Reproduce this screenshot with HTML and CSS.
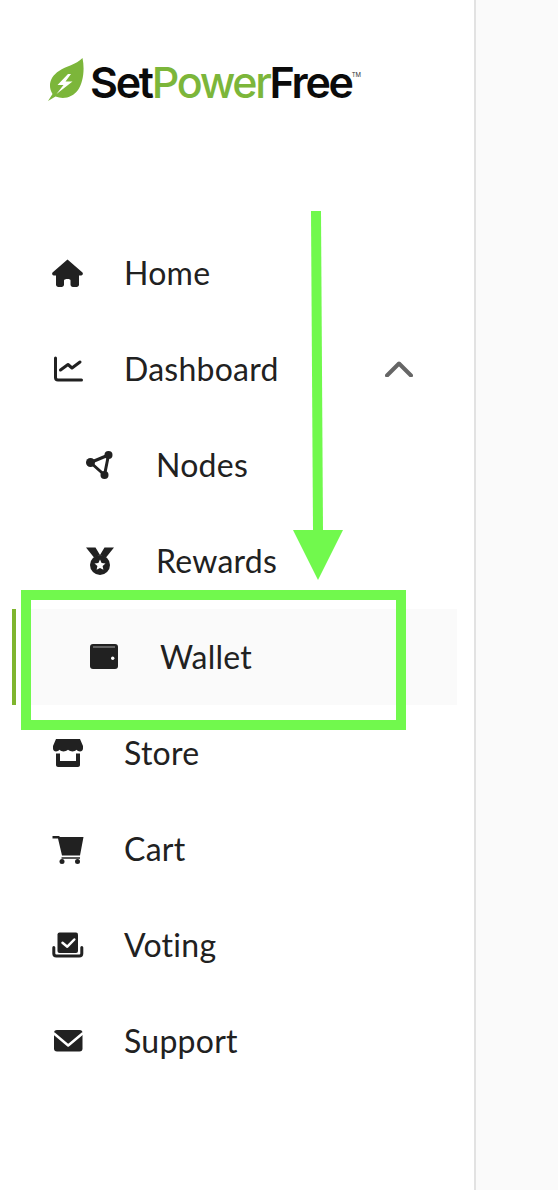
FILE: index.html
```html
<!DOCTYPE html>
<html lang="en">
<head>
  <meta charset="UTF-8">
  <meta name="viewport" content="width=device-width, initial-scale=1.0">
  <title>SetPowerFree Wallet</title>
  <link rel="stylesheet" href="styles.css">
</head>
<body>
  <aside class="sidebar">
    <div class="logo">
      <svg class="logo-leaf" viewBox="48 58 37 43" width="37" height="43">
        <path fill="#7cb63a" d="M82.5 58C76 65 66 66 59 71C51 76 47 85 52.5 94L48 101L55.5 96.5C64 100 73 97 78 90C83 83 85 70 82.5 58Z"/>
        <path fill="#fff" d="M68 74L57.5 85H63.5L56.5 94L72.5 81.5H65.5L71 74Z"/>
      </svg>
      <span class="logo-text">Set<span class="logo-green">Power</span>Free</span><span class="logo-tm">TM</span>
    </div>

    <nav class="nav">
      <a class="nav-item">
        <svg class="nav-icon" viewBox="0 0 36 36"><path d="M19.5 4.5L34.5 17.5C35.5 18.8 34.5 20.5 33 20.5H31V29.5C31 31 30 32 28.5 32H25C23.5 32 22.5 31 22.5 29.5V25.5C22.5 24.5 21.5 24 19.5 24C17.5 24 16 24.5 16 25.5V29.5C16 31 15 32 13.5 32H10.5C9 32 8 31 8 29.5V20.5H6C4.5 20.5 3.5 18.8 4.5 17.5Z"/></svg>
        <span>Home</span>
      </a>
      <a class="nav-item">
        <svg class="nav-icon nav-icon-line" viewBox="0 0 36 36"><path d="M7.5 7V26.5A2.5 2.5 0 0 0 10 29H33.5"/><path d="M12.5 19L20 13.5L24 17L32 11"/></svg>
        <span>Dashboard</span>
        <svg class="chevron" viewBox="0 0 28 16" width="28" height="16"><path d="M2 14.5L14 2.5L26 14.5"/></svg>
      </a>
      <a class="nav-item nav-sub">
        <svg class="nav-icon nav-icon-line" viewBox="0 0 36 36"><path d="M28.5 8L10.5 15.5L24.5 28Z"/><circle class="dot" cx="28.5" cy="8" r="4"/><circle class="dot" cx="10.5" cy="15.5" r="4.5"/><circle class="dot" cx="24.5" cy="28" r="4"/></svg>
        <span>Nodes</span>
      </a>
      <a class="nav-item nav-sub">
        <svg class="nav-icon" viewBox="0 0 36 36"><path d="M6 4.5H15.5L20 12L14 14.5ZM34 4.5H24.5L20 12L26 14.5Z"/><circle cx="20" cy="22" r="10"/><path fill="#fff" d="M20 16.5L21.6 20L25.5 20.4L22.6 23L23.4 26.8L20 24.9L16.6 26.8L17.4 23L14.5 20.4L18.4 20Z"/></svg>
        <span>Rewards</span>
      </a>
      <a class="nav-item nav-active">
        <svg class="nav-icon" viewBox="0 0 36 36"><rect x="6" y="5" width="28" height="25" rx="3"/><path class="wallet-gap" d="M9 8H31"/><circle cx="28.7" cy="19.3" r="1.7" fill="#fafafa"/></svg>
        <span>Wallet</span>
      </a>
      <a class="nav-item">
        <svg class="nav-icon" viewBox="0 0 36 36"><path d="M8 4H32L35 11V13.5C35 15.5 33.5 16.5 32 16.5C30.5 16.5 29.5 15.8 28.5 14.8C27.5 15.8 26 16.5 24.5 16.5C23 16.5 21.5 15.8 20 14.8C18.5 15.8 17 16.5 15.5 16.5C14 16.5 12.5 15.8 11.5 14.8C10.5 15.8 9.5 16.5 8 16.5C6.5 16.5 5 15.5 5 13.5V11Z"/><path d="M8 18.5H12V26H28V18.5H32V30C32 31.2 31 32 30 32H10C9 32 8 31.2 8 30Z"/></svg>
        <span>Store</span>
      </a>
      <a class="nav-item">
        <svg class="nav-icon" viewBox="0 0 36 36"><path d="M11.5 6H35.5L32 24.5H14L10 7.5H4.5V5H11.5Z"/><path class="cart-rail" d="M13.5 27H32"/><circle cx="14" cy="30.5" r="2.5"/><circle cx="29.5" cy="30.5" r="2.5"/></svg>
        <span>Cart</span>
      </a>
      <a class="nav-item">
        <svg class="nav-icon" viewBox="0 0 36 36"><rect x="9.5" y="5.5" width="20.5" height="20.5" rx="2"/><path class="check" d="M14.5 15.8L19.3 19.7L26.3 12.5"/><path class="tray" d="M5.8 20.5V26.5A2.5 2.5 0 0 0 8.3 29H31.3A2.5 2.5 0 0 0 33.8 26.5V20.5"/></svg>
        <span>Voting</span>
      </a>
      <a class="nav-item">
        <svg class="nav-icon" viewBox="0 0 36 36"><rect x="6" y="7" width="28.5" height="21.5" rx="3"/><path class="check" d="M6 10.5L20.2 22.5L34.5 10.5"/></svg>
        <span>Support</span>
      </a>
    </nav>
  </aside>
  <main class="content"></main>

  <!-- annotation drawn over the screenshot -->
  <div class="mark-box"></div>
  <svg class="mark-arrow" viewBox="0 0 56 372" width="56" height="372">
    <path d="M3 321H53L28 371Z"/>
    <path d="M21 2H31L33 322H23Z"/>
  </svg>
</body>
</html>
```

FILE: styles.css
```css
* { box-sizing: border-box; }
html, body { height: 100%; }
body { margin: 0; display: flex; background-color: #fff; color: #212121; font-family: Lato, "Open Sans", sans-serif; overflow: hidden; }

.sidebar { width: 476px; flex-shrink: 0; padding-top: 58px; background-color: #fff; border-right: 2px solid #e2e2e2; }
.content { flex: 1; background-color: #fafafa; }

.logo { display: flex; align-items: center; height: 43px; margin-left: 48px; margin-bottom: 124px; }
.logo-leaf { flex-shrink: 0; }
.logo-text { margin-left: 5px; padding-top: 5px; font-family: Inter, Roboto, sans-serif; font-size: 43px; font-weight: 600; letter-spacing: -2.3px; color: #0b0b0b; line-height: 44px; }
.logo-green { color: #7cb63a; font-weight: 500; }
.logo-tm { align-self: flex-start; margin-top: 13px; font-family: Inter, sans-serif; font-size: 6px; color: #333; }

.nav-item { position: relative; display: flex; align-items: center; height: 96px; padding-left: 48px; font-size: 32px; line-height: 36px; letter-spacing: 0.25px; }
.nav-item span { margin-left: 40px; }
.nav-icon { width: 36px; height: 36px; flex-shrink: 0; fill: #212121; }
.nav-sub { padding-left: 80px; }
.nav-active { margin-left: 30px; margin-right: 17px; padding-left: 54px; background-color: #fafafa; }
.nav-active::before { content: ""; position: absolute; left: -18px; top: 0; bottom: 0; width: 4px; background-color: #7fb52e; }

.nav-icon-line path { fill: none; stroke: #212121; stroke-width: 3; stroke-linecap: round; stroke-linejoin: round; }
.nav-icon-line .dot { fill: #212121; }
.wallet-gap { fill: none; stroke: #fafafa; stroke-width: 1; opacity: 0.6; }
.cart-rail { fill: none; stroke: #212121; stroke-width: 1.5; }
.check { fill: none; stroke: #fff; stroke-width: 2.5; stroke-linecap: round; stroke-linejoin: round; }
.tray { fill: none; stroke: #212121; stroke-width: 3; stroke-linecap: round; }

.chevron { position: absolute; left: 385px; top: 40px; }
.chevron path { fill: none; stroke: #666; stroke-width: 4; stroke-linecap: round; stroke-linejoin: round; }

.mark-box { position: absolute; left: 21px; top: 590px; width: 385px; height: 140px; border: 10px solid #71f94d; }
.mark-arrow { position: absolute; left: 290px; top: 209px; fill: #71f94d; }
```
